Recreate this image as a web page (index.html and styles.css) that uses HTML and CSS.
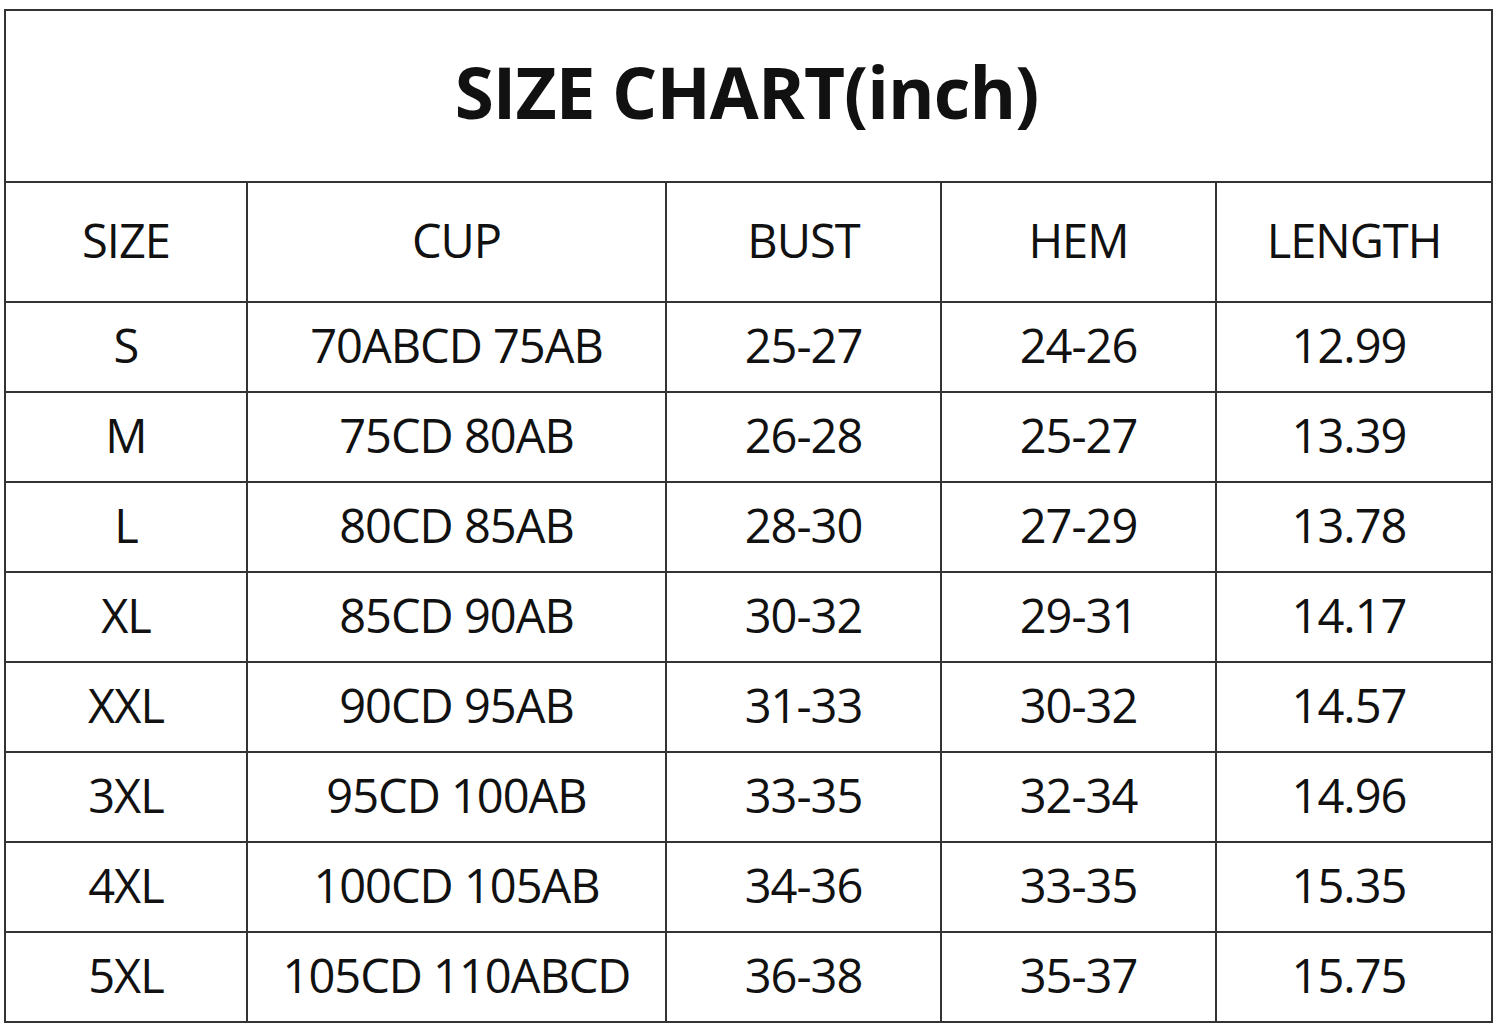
FILE: index.html
```html
<!DOCTYPE html>
<html>
<head>
<meta charset="utf-8">
<link rel="stylesheet" href="styles.css">
</head>
<body>
<div class="chart">
  <div class="title">SIZE CHART(inch)</div>
  <div class="cell head">SIZE</div><div class="cell head">CUP</div><div class="cell head">BUST</div><div class="cell head">HEM</div><div class="cell head">LENGTH</div>
  <div class="cell">S</div><div class="cell">70ABCD 75AB</div><div class="cell">25-27</div><div class="cell">24-26</div><div class="cell num">12.99</div>
  <div class="cell">M</div><div class="cell">75CD 80AB</div><div class="cell">26-28</div><div class="cell">25-27</div><div class="cell num">13.39</div>
  <div class="cell">L</div><div class="cell">80CD 85AB</div><div class="cell">28-30</div><div class="cell">27-29</div><div class="cell num">13.78</div>
  <div class="cell">XL</div><div class="cell">85CD 90AB</div><div class="cell">30-32</div><div class="cell">29-31</div><div class="cell num">14.17</div>
  <div class="cell">XXL</div><div class="cell">90CD 95AB</div><div class="cell">31-33</div><div class="cell">30-32</div><div class="cell num">14.57</div>
  <div class="cell">3XL</div><div class="cell">95CD 100AB</div><div class="cell">33-35</div><div class="cell">32-34</div><div class="cell num">14.96</div>
  <div class="cell">4XL</div><div class="cell">100CD 105AB</div><div class="cell">34-36</div><div class="cell">33-35</div><div class="cell num">15.35</div>
  <div class="cell">5XL</div><div class="cell">105CD 110ABCD</div><div class="cell">36-38</div><div class="cell">35-37</div><div class="cell num">15.75</div>
</div>
</body>
</html>
```
FILE: styles.css
```css
html, body {
  margin: 0;
  padding: 0;
  background: #ffffff;
}
body {
  padding: 9px 0 0 4px;
  font-family: "Open Sans", "Liberation Sans", sans-serif;
  color: #111111;
}
.chart {
  display: grid;
  grid-template-columns: 240px 417px 273px 273px 274px;
  grid-template-rows: 170px 118px repeat(8, 88px);
  gap: 2px;
  padding: 2px;
  width: max-content;
  background: #333333;
}
.title {
  grid-column: 1 / -1;
  background: #ffffff;
  display: flex;
  align-items: center;
  justify-content: center;
  font-weight: 700;
  font-size: 71px;
  letter-spacing: -0.9px;
  padding-bottom: 10px;
  padding-right: 4px;
}
.cell {
  background: #ffffff;
  display: flex;
  align-items: center;
  justify-content: center;
  font-size: 47px;
  letter-spacing: -1px;
  white-space: nowrap;
  padding-bottom: 4px;
}
.num {
  padding-right: 10px;
}
```
